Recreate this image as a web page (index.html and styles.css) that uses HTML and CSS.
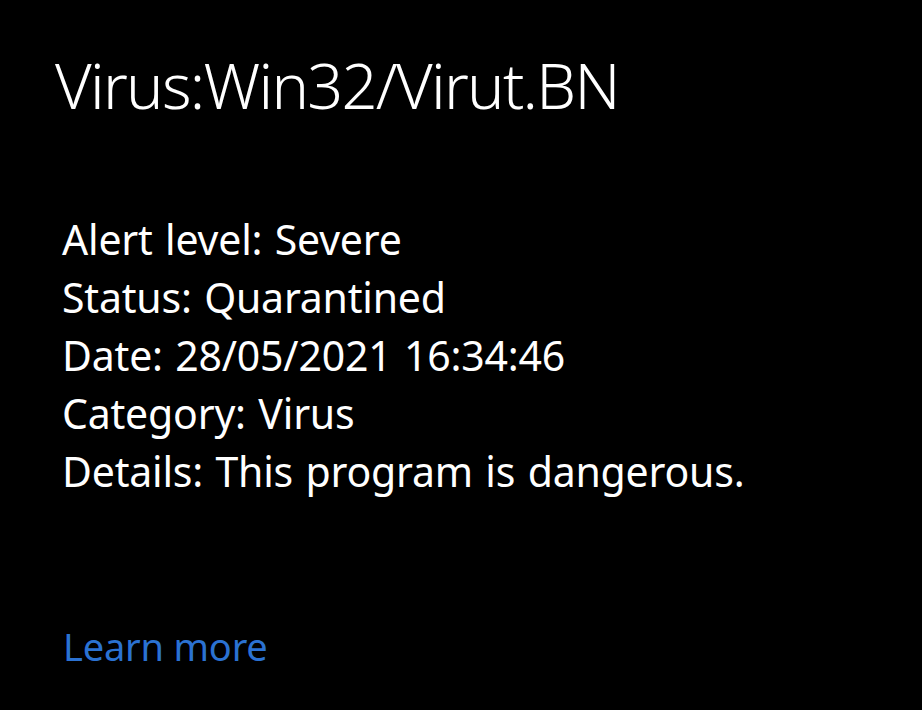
FILE: index.html
```html
<!DOCTYPE html>
<html>
<head>
<meta charset="utf-8">
<link rel="stylesheet" href="styles.css">
</head>
<body>
<main class="panel">
  <h1 class="title">Virus:Win32/Virut.BN</h1>
  <dl class="details">
    <div class="row">Alert level: Severe</div>
    <div class="row">Status: Quarantined</div>
    <div class="row">Date: 28/05/2021 16:34:46</div>
    <div class="row">Category: Virus</div>
    <div class="row">Details: This program is dangerous.</div>
  </dl>
  <a class="learn" href="#">Learn more</a>
</main>
</body>
</html>
```
FILE: styles.css
```css
html, body {
  margin: 0;
  padding: 0;
  background: #000;
  height: 100%;
}
.panel {
  display: flex;
  flex-direction: column;
  align-items: flex-start;
  padding: 0 0 0 55px;
  font-family: "Noto Sans", "Open Sans", sans-serif;
  color: #fff;
}
.title {
  margin: 40px 0 0 0;
  font-weight: 350;
  font-size: 63px;
  letter-spacing: -1.7px;
  line-height: 90px;
}
.details {
  margin: 80px 0 0 7px;
  font-size: 41px;
  line-height: 58px;
  letter-spacing: -0.2px;
  word-spacing: 2px;
}
.learn {
  margin: 120px 0 0 8px;
  font-size: 38px;
  letter-spacing: -0.2px;
  color: #2b72d2;
  text-decoration: none;
}
```
